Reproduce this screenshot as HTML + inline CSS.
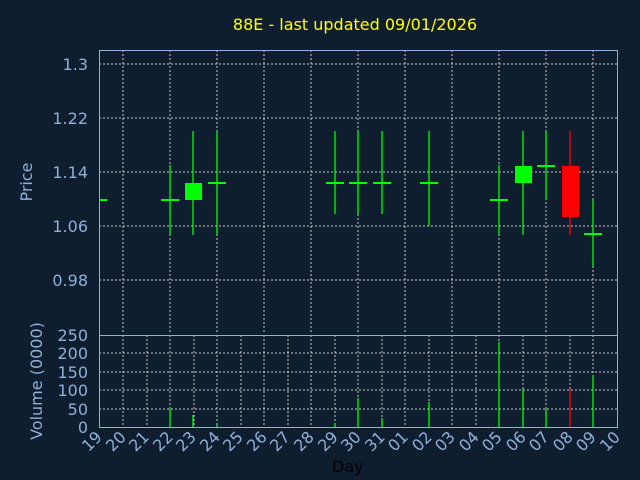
<!DOCTYPE html><html><head><style>body{margin:0;background:#0f1e2f}svg{display:block}</style></head><body>
<svg width="640" height="480" xmlns="http://www.w3.org/2000/svg" font-family="DejaVu Sans, sans-serif">
<rect width="640" height="480" fill="#0f1e2f"/>
<text x="355" y="30" fill="#ffff00" font-size="16" text-anchor="middle">88E - last updated 09/01/2026</text>
<g stroke="#c8c8c8" stroke-dasharray="2,2" stroke-width="1">
<path d="M99 64H617M99 118H617M99 172H617M99 226H617M99 280H617"/>
<path d="M123 50V334M170 50V334M217 50V334M264 50V334M311 50V334M358 50V334M405 50V334M452 50V334M499 50V334M546 50V334M593 50V334"/>
<path d="M99 353H617M99 372H617M99 390H617M99 409H617"/>
<path d="M123 335V427M147 335V427M170 335V427M194 335V427M217 335V427M241 335V427M264 335V427M288 335V427M311 335V427M335 335V427M358 335V427M382 335V427M405 335V427M429 335V427M452 335V427M476 335V427M499 335V427M523 335V427M546 335V427M570 335V427M593 335V427"/>
</g>
<g stroke="#8fb0d8" fill="none"><rect x="99.5" y="50.5" width="518" height="377"/><path d="M99 335.5H617"/></g>
<g fill="#8fb0d8" font-size="16" text-anchor="end">
<text x="88" y="70">1.3</text><text x="88" y="124">1.22</text><text x="88" y="178">1.14</text><text x="88" y="232">1.06</text><text x="88" y="286">0.98</text>
<text x="88" y="341">250</text><text x="88" y="359">200</text><text x="88" y="378">150</text><text x="88" y="396">100</text><text x="88" y="415">50</text><text x="88" y="433">0</text>
<text transform="translate(32,182) rotate(-90)" text-anchor="middle">Price</text>
<text transform="translate(42,381) rotate(-90)" text-anchor="middle">Volume (0000)</text>
</g>
<g fill="#8fb0d8" font-size="16" text-anchor="end">
<text transform="translate(103,438) rotate(-45)">19</text><text transform="translate(127,438) rotate(-45)">20</text><text transform="translate(150,438) rotate(-45)">21</text><text transform="translate(174,438) rotate(-45)">22</text><text transform="translate(197,438) rotate(-45)">23</text><text transform="translate(221,438) rotate(-45)">24</text><text transform="translate(244,438) rotate(-45)">25</text><text transform="translate(268,438) rotate(-45)">26</text><text transform="translate(291,438) rotate(-45)">27</text><text transform="translate(315,438) rotate(-45)">28</text><text transform="translate(339,438) rotate(-45)">29</text><text transform="translate(362,438) rotate(-45)">30</text><text transform="translate(386,438) rotate(-45)">31</text><text transform="translate(409,438) rotate(-45)">01</text><text transform="translate(433,438) rotate(-45)">02</text><text transform="translate(456,438) rotate(-45)">03</text><text transform="translate(480,438) rotate(-45)">04</text><text transform="translate(503,438) rotate(-45)">05</text><text transform="translate(527,438) rotate(-45)">06</text><text transform="translate(550,438) rotate(-45)">07</text><text transform="translate(574,438) rotate(-45)">08</text><text transform="translate(597,438) rotate(-45)">09</text><text transform="translate(621,438) rotate(-45)">10</text>
</g>
<text x="332" y="472" fill="#000" font-size="16">Day</text>
<g stroke="#00ff00" stroke-width="1.3">
<path d="M170 165V235M193 131V235M217 131V235M335 131V214M358 131V214M382 131V214M429 131V226M499 165V235M523 131V235M546 131V200M593 200V267"/>
<path d="M99 200H107M161 200H179M208 183H226M326 183H344M349 183H367M373 183H391M420 183H438M490 200H508M537 166H555M584 234H602" stroke-width="2"/>
<path d="M170 427V408M193 427V415M217 427V425M335 427V424M358 427V398M382 427V418M429 427V402M499 427V342M523 427V389M546 427V409M593 427V375"/>
</g>
<rect x="185" y="183" width="17" height="17" fill="#00ff00"/>
<rect x="515" y="166" width="17" height="17" fill="#00ff00"/>
<g stroke="#ff0000" stroke-width="1.3"><path d="M570 131V235M570 427V389"/></g>
<rect x="562" y="166" width="17" height="51" fill="#ff0000"/>
</svg></body></html>
